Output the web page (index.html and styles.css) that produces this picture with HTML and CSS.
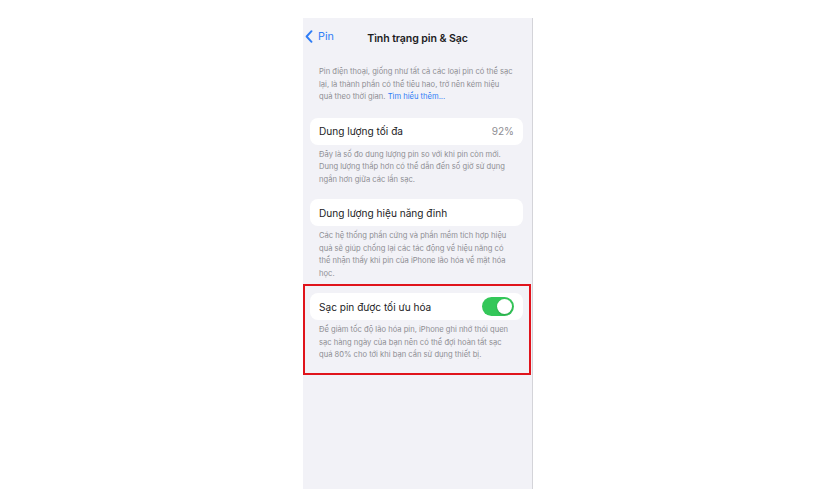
FILE: index.html
```html
<!DOCTYPE html>
<html lang="vi">
<head>
<meta charset="utf-8">
<title>Tình trạng pin &amp; Sạc</title>
<link rel="stylesheet" href="styles.css">
</head>
<body>
<div class="screen">
  <div class="nav">
    <a class="back">
      <svg class="chev" width="8" height="13" viewBox="0 0 8 13"><path d="M6.5 1.2 L1.6 6.5 L6.5 11.8" fill="none" stroke="#2f7df6" stroke-width="1.9" stroke-linecap="round" stroke-linejoin="round"/></svg>
      <span>Pin</span>
    </a>
    <div class="title">Tình trạng pin &amp; Sạc</div>
  </div>
  <p class="note intro">Pin điện thoại, giống như tất cả các loại pin có thể sạc<br>lại, là thành phần có thể tiêu hao, trở nên kém hiệu<br>quả theo thời gian. <span class="link">Tìm hiểu thêm...</span></p>

  <div class="card">
    <span class="label">Dung lượng tối đa</span>
    <span class="value">92%</span>
  </div>
  <p class="note">Đây là số đo dung lượng pin so với khi pin còn mới.<br>Dung lượng thấp hơn có thể dẫn đến số giờ sử dụng<br>ngắn hơn giữa các lần sạc.</p>

  <div class="card">
    <span class="label">Dung lượng hiệu năng đỉnh</span>
  </div>
  <p class="note">Các hệ thống phần cứng và phần mềm tích hợp hiệu<br>quả sẽ giúp chống lại các tác động về hiệu năng có<br>thể nhận thấy khi pin của iPhone lão hóa về mặt hóa<br>học.</p>

  <div class="card">
    <span class="label">Sạc pin được tối ưu hóa</span>
    <span class="toggle"><span class="knob"></span></span>
  </div>
  <p class="note">Để giảm tốc độ lão hóa pin, iPhone ghi nhớ thói quen<br>sạc hàng ngày của bạn nên có thể đợi hoàn tất sạc<br>quá 80% cho tới khi bạn cần sử dụng thiết bị.</p>

  <div class="highlight"></div>
</div>
</body>
</html>
```
FILE: styles.css
```css
* { box-sizing: border-box; }
html, body { margin: 0; padding: 0; background: #ffffff; }
body {
  width: 840px;
  height: 500px;
  overflow: hidden;
  font-family: Inter, "Noto Sans", "DejaVu Sans", sans-serif;
}
.screen {
  position: relative;
  margin: 18px 0 0 303px;
  width: 230px;
  height: 471px;
  background: #f2f2f7;
  border-right: 1px solid #d4d4d9;
  display: flex;
  flex-direction: column;
}
.nav {
  position: relative;
  height: 40px;
  display: flex;
  align-items: center;
  justify-content: center;
}
.back {
  position: absolute;
  left: 2px;
  top: 12px;
  display: flex;
  align-items: center;
  gap: 5px;
  color: #2f7df6;
  font-size: 10.8px;
}
.title {
  font-size: 10.6px;
  font-weight: 600;
  color: #1c1c1e;
  letter-spacing: -0.1px;
}
.note {
  margin: 0;
  padding: 0 8px 0 16px;
  font-size: 7.6px;
  line-height: 12.5px;
  color: #8e8e93;
  white-space: nowrap;
}
.intro { margin-top: 8px; margin-bottom: 14px; }
.link { color: #2f7df6; }
.card {
  margin: 0 9px 0 7px;
  height: 27px;
  background: #ffffff;
  border-radius: 8px;
  padding: 0 9px;
  display: flex;
  align-items: center;
  justify-content: space-between;
  font-size: 10.1px;
  color: #1c1c1e;
}
.card + .note { margin-top: 4px; margin-bottom: 13px; }
.value { color: #8e8e93; }
.toggle {
  width: 32px;
  height: 19px;
  border-radius: 10px;
  background: #34c759;
  display: flex;
  align-items: center;
  justify-content: flex-end;
  padding: 0 2px;
}
.knob {
  width: 15px;
  height: 15px;
  border-radius: 50%;
  background: #ffffff;
  box-shadow: 0 1px 2px rgba(0,0,0,0.2);
}
.highlight {
  position: absolute;
  left: 0;
  top: 266px;
  width: 228px;
  height: 91px;
  border: 2px solid #e0141c;
  pointer-events: none;
}
```
